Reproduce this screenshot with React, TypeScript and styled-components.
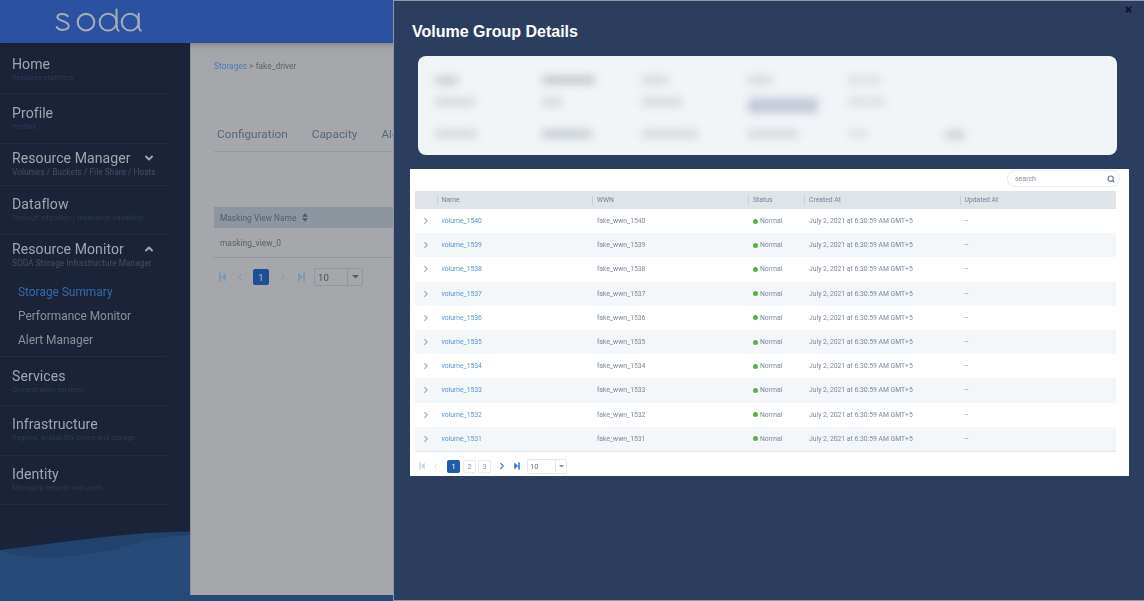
import React from "react";
import styled, { createGlobalStyle } from "styled-components";
import { ChevronDown, ChevronUp, ChevronLeft, ChevronRight, Search, X } from "lucide-react";

const Global = createGlobalStyle`
  html, body { margin: 0; padding: 0; height: 100%; overflow: hidden; background: #2c3e60; }
  * { box-sizing: border-box; }
  body { font-family: Roboto, "Liberation Sans", sans-serif; }
`;

const Page = styled.div`
  position: relative;
  width: 1144px;
  height: 601px;
  display: flex;
  flex-direction: column;
  overflow: hidden;
`;
const Header = styled.header`
  flex: 0 0 43px;
  background: #2a52a0;
  padding: 8px 0 0 55px;
  position: relative;
  z-index: 2;
  box-shadow: 0 1px 6px rgba(30, 30, 40, 0.35);
`;
const Body = styled.div`
  position: relative;
  flex: 1;
  display: flex;
  background: #1a2338;
`;
const WaveArt = styled.svg`
  position: absolute;
  left: 0;
  bottom: 0;
  width: 420px;
  height: 70px;
`;
const Sidebar = styled.nav`
  position: relative;
  flex: 0 0 190px;
  filter: blur(0.35px);
`;
const NavItem = styled.div<{ $h: number; $pt: number }>`
  width: 167px;
  height: ${(p) => p.$h}px;
  padding: ${(p) => p.$pt}px 0 0 12px;
  border-bottom: 1px solid #222c44;
`;
const NavTitleRow = styled.div`
  display: flex;
  align-items: center;
  justify-content: space-between;
  height: 16px;
  padding-right: 12px;
  color: #a1a5ad;
`;
const NavTitle = styled.span`
  font-size: 14.1px;
  line-height: 16px;
  letter-spacing: 0.05px;
`;
const NavSub = styled.div<{ $bright?: boolean }>`
  font-size: ${(p) => (p.$bright ? 8.35 : 7.2)}px;
  line-height: 11px;
  margin-top: ${(p) => (p.$bright ? 1 : 0)}px;
  white-space: nowrap;
  color: ${(p) => (p.$bright ? "#454e63" : "#2f3950")};
`;
const SubList = styled.div`
  display: flex;
  flex-direction: column;
  margin: 11px 0 0 6px;
`;
const SubLink = styled.div<{ $active?: boolean }>`
  height: 24px;
  line-height: 24px;
  font-size: 11.9px;
  white-space: nowrap;
  color: ${(p) => (p.$active ? "#2f6db3" : "#8c9099")};
`;
const Content = styled.main`
  position: relative;
  flex: 0 0 954px;
  height: 552px;
  padding: 17px 0 0 23px;
  background: #a6a7aa;
  border-left: 1px solid #8f9297;
  filter: blur(0.3px);
`;
const Crumbs = styled.div`
  font-size: 8.4px;
  line-height: 12px;
  color: #5f646d;
`;
const CrumbLink = styled.span`
  color: #4a7db5;
`;
const Tabs = styled.div`
  display: flex;
  gap: 24px;
  width: 400px;
  height: 32px;
  margin-top: 48px;
  padding: 7px 0 0 3px;
  border-bottom: 1px solid #96999e;
`;
const Tab = styled.span`
  font-size: 11.8px;
  line-height: 15px;
  color: #56677d;
`;
const BgTableHead = styled.div`
  display: flex;
  align-items: center;
  gap: 6px;
  width: 400px;
  height: 21px;
  margin-top: 55px;
  padding-left: 6px;
  background: #8d969e;
  color: #515d6b;
  font-size: 8.4px;
`;
const BgTableRow = styled.div`
  width: 400px;
  height: 30px;
  padding-left: 6px;
  line-height: 31px;
  font-size: 8.4px;
  color: #5a5f68;
  border-bottom: 1px solid #92979c;
`;
const Pager = styled.div<{ $top: number }>`
  display: flex;
  align-items: center;
  margin-top: ${(p) => p.$top}px;
`;
const Slot = styled.span<{ $gap: number; $color?: string }>`
  display: inline-flex;
  margin-left: ${(p) => p.$gap}px;
  color: ${(p) => p.$color ?? "inherit"};
`;
const PageBox = styled.span<{ $gap: number; $size: number; $active?: boolean; $dim?: boolean }>`
  display: inline-flex;
  align-items: center;
  justify-content: center;
  width: ${(p) => p.$size}px;
  height: ${(p) => p.$size}px;
  margin-left: ${(p) => p.$gap}px;
  border-radius: 2px;
  font-size: ${(p) => (p.$dim ? 9.5 : 7.5)}px;
  border: 1px solid ${(p) => (p.$active ? "transparent" : "#e5ebf0")};
  background: ${(p) => (p.$active ? (p.$dim ? "#1f4f92" : "#1f5cab") : "transparent")};
  color: ${(p) => (p.$active ? (p.$dim ? "#b8c2d0" : "#fff") : "#6d9ad0")};
`;
const SizeSelect = styled.span<{ $gap: number; $w: number; $h: number; $dim?: boolean }>`
  display: inline-flex;
  align-items: stretch;
  width: ${(p) => p.$w}px;
  height: ${(p) => p.$h}px;
  margin-left: ${(p) => p.$gap}px;
  border: 1px solid ${(p) => (p.$dim ? "#94979c" : "#e5e9ec")};
  border-radius: 2px;
  font-size: ${(p) => (p.$dim ? 9.6 : 7.5)}px;
  color: ${(p) => (p.$dim ? "#4c5159" : "#687684")};
`;
const SizeValue = styled.span<{ $dim?: boolean }>`
  flex: 1;
  display: flex;
  align-items: center;
  padding-left: ${(p) => (p.$dim ? 3 : 2)}px;
  border-right: 1px solid ${(p) => (p.$dim ? "#94979c" : "#e5e9ec")};
`;
const SizeArrow = styled.span<{ $dim?: boolean }>`
  flex: 0 0 ${(p) => (p.$dim ? 14 : 10)}px;
  display: flex;
  align-items: center;
  justify-content: center;
  color: ${(p) => (p.$dim ? "#4f5d70" : "#7c8a98")};
`;
const Modal = styled.section`
  position: absolute;
  left: 394px;
  top: 1px;
  right: 0;
  bottom: 1px;
  z-index: 5;
  background: #2c3e60;
  box-shadow: 0 0 0 1px #8f97a5;
`;
const CloseBtn = styled.span`
  position: absolute;
  top: 4px;
  right: 11px;
  display: flex;
  color: #10182a;
`;
const ModalTitle = styled.h2`
  margin: 0;
  padding: 20.5px 0 0 18px;
  font: bold 16px/20px "Liberation Sans", Arial, sans-serif;
  color: #fff;
`;
const DetailCard = styled.div`
  width: 699px;
  height: 99px;
  margin: 14.5px 0 0 24px;
  padding: 20px 0 0 17px;
  background: #f1f5f7;
  border-radius: 8px;
  display: grid;
  grid-template-columns: 107px 100px 106px 100px 97px 60px;
  grid-template-rows: 22px 32px auto;
  overflow: hidden;
`;
const BlurBar = styled.span<{ $w: number; $h?: number; $tone?: string }>`
  display: block;
  width: ${(p) => p.$w}px;
  height: ${(p) => p.$h ?? 8}px;
  background: ${(p) => p.$tone ?? "#d2d7dc"};
  filter: blur(4.5px);
  border-radius: 2px;
`;
const TablePanel = styled.div`
  width: 719px;
  height: 307px;
  margin: 14px 0 0 16px;
  padding: 1px 5px 0;
  background: #fff;
  filter: blur(0.4px);
`;
const SearchRow = styled.div`
  display: flex;
  justify-content: flex-end;
  padding-right: 4px;
  height: 21px;
`;
const SearchBox = styled.div`
  display: flex;
  align-items: center;
  justify-content: space-between;
  width: 113px;
  height: 17px;
  padding: 0 4px 0 7px;
  border: 1px solid #e9edf0;
  border-radius: 8px;
  font-size: 7px;
  color: #84909c;
`;
const SearchGlyph = styled.span`
  display: flex;
  color: #6f8296;
`;
const gridCols = "21.5px 155.5px 156px 56px 155.5px 1fr";
const HeadRow = styled.div`
  display: grid;
  grid-template-columns: ${gridCols};
  width: 701px;
  height: 18px;
  background: #dee4e8;
  align-items: center;
`;
const HeadCell = styled.div`
  height: 9px;
  padding-left: 4px;
  line-height: 9px;
  font-size: 6.8px;
  color: #74869a;
  border-left: 1px solid #c8d0d6;
  white-space: nowrap;
`;
const HeadEmpty = styled.div``;
const DataRow = styled.div<{ $alt: boolean }>`
  display: grid;
  grid-template-columns: ${gridCols};
  align-items: center;
  width: 701px;
  height: 24.2px;
  background: ${(p) => (p.$alt ? "#f3f7f9" : "#fff")};
  font-size: 6.8px;
  color: #7b8999;
  white-space: nowrap;
`;
const Rows = styled.div`
  border-bottom: 1px solid #e4e9ec;
  width: 701px;
`;
const ExpandCell = styled.span`
  display: flex;
  justify-content: center;
  padding-left: 1px;
  color: #83909e;
`;
const Cell = styled.span`
  padding-left: 5px;
`;
const NameCell = styled(Cell)`
  color: #5b92d4;
`;
const StatusCell = styled.span`
  display: flex;
  align-items: center;
  gap: 2px;
  padding-left: 5px;
`;
const Dot = styled.i`
  width: 5px;
  height: 5px;
  border-radius: 50%;
  background: #5cb04a;
`;

const Logo = () => (
  <svg width="87" height="25" viewBox="0 0 90 26" fill="none" stroke="#a5adb6" strokeWidth="2.1" strokeLinecap="round">
    <path d="M13 8.5C11 5.8 3 5 2.2 9.3 1.8 14 13.6 12.8 14 18.5 14 23.6 4 24.2 1.5 19.8" />
    <circle cx="32" cy="14.7" r="8.6" />
    <circle cx="55" cy="14.7" r="8.8" />
    <path d="M63.8 1.5V15.5C63.8 20 64.5 23 66 23.5" />
    <circle cx="78" cy="14.7" r="8.8" />
    <path d="M86.8 6V17C86.8 21 87.5 23 89 23.5" />
  </svg>
);

const EdgeIcon = ({ last, w, h }: { last?: boolean; w: number; h: number }) => (
  <svg width={w} height={h} viewBox="0 0 7 10" fill="currentColor">
    {last ? (
      <>
        <path d="M0 0.5 5 5 0 9.5Z" />
        <rect x="5" y="0.5" width="2" height="9" />
      </>
    ) : (
      <>
        <rect x="0" y="0.5" width="2" height="9" />
        <path d="M7 0.5 2 5 7 9.5Z" />
      </>
    )}
  </svg>
);
const Caret = ({ w }: { w: number }) => (
  <svg width={w} height={w / 2} viewBox="0 0 8 4" fill="currentColor">
    <path d="M0 0H8L4 4Z" />
  </svg>
);
const SortIcon = () => (
  <svg width="6" height="9" viewBox="0 0 7 10" fill="#4c5867">
    <path d="M3.5 0 7 4H0ZM3.5 10 0 6H7Z" />
  </svg>
);

const rowsData = [1540, 1539, 1538, 1537, 1536, 1535, 1534, 1533, 1532, 1531];

const blurCells: Array<[number, number, number, number?, string?]> = [
  [1, 1, 23, 9, "#c9ced3"], [2, 1, 53, 8, "#c0c5cb"], [3, 1, 26, 8], [4, 1, 24, 8], [5, 1, 33, 8, "#dbdfe3"],
  [1, 2, 40], [2, 2, 20], [3, 2, 40], [4, 2, 70, 15, "#c2c9d6"], [5, 2, 37, 8, "#dbdfe3"],
  [1, 3, 42], [2, 3, 50, 8, "#c4c9cf"], [3, 3, 56], [4, 3, 50], [5, 3, 20, 7, "#dde1e4"], [6, 3, 20, 10, "#cfd3d8"],
];
const GridSpot = styled.div<{ $c: number; $r: number }>`
  grid-column: ${(p) => p.$c};
  grid-row: ${(p) => p.$r};
`;

export default function App() {
  return (
    <Page>
      <Global />
      <Header>
        <Logo />
      </Header>
      <Body>
        <WaveArt viewBox="0 0 420 70" preserveAspectRatio="none">
          <path d="M0 19C60 12 110 3 170 1 180 .6 190 .6 420 .6V70H0Z" fill="#21426d" />
          <path d="M0 19.6C12 24 22 26 40 26.2 70 26.5 100 23 130 14 150 8 170 5 190 4H420V70H0Z" fill="#254a78" />
        </WaveArt>
        <Sidebar>
          <NavItem $h={51} $pt={13}>
            <NavTitleRow><NavTitle>Home</NavTitle></NavTitleRow>
            <NavSub>Resource statistics</NavSub>
          </NavItem>
          <NavItem $h={50} $pt={11}>
            <NavTitleRow><NavTitle>Profile</NavTitle></NavTitleRow>
            <NavSub>Profiles</NavSub>
          </NavItem>
          <NavItem $h={42} $pt={6}>
            <NavTitleRow>
              <NavTitle>Resource Manager</NavTitle>
              <ChevronDown size={12} strokeWidth={4} />
            </NavTitleRow>
            <NavSub $bright>Volumes / Buckets / File Share / Hosts</NavSub>
          </NavItem>
          <NavItem $h={49} $pt={10}>
            <NavTitleRow><NavTitle>Dataflow</NavTitle></NavTitleRow>
            <NavSub>Through migration / replication capability.</NavSub>
          </NavItem>
          <NavItem $h={122} $pt={6}>
            <NavTitleRow>
              <NavTitle>Resource Monitor</NavTitle>
              <ChevronUp size={12} strokeWidth={4} />
            </NavTitleRow>
            <NavSub $bright>SODA Storage Infrastructure Manager</NavSub>
            <SubList>
              <SubLink $active>Storage Summary</SubLink>
              <SubLink>Performance Monitor</SubLink>
              <SubLink>Alert Manager</SubLink>
            </SubList>
          </NavItem>
          <NavItem $h={49} $pt={11}>
            <NavTitleRow><NavTitle>Services</NavTitle></NavTitleRow>
            <NavSub>Orchestration services.</NavSub>
          </NavItem>
          <NavItem $h={50} $pt={10}>
            <NavTitleRow><NavTitle>Infrastructure</NavTitle></NavTitleRow>
            <NavSub>Regions, availability zones and storage</NavSub>
          </NavItem>
          <NavItem $h={49} $pt={10}>
            <NavTitleRow><NavTitle>Identity</NavTitle></NavTitleRow>
            <NavSub>Managing tenants and users</NavSub>
          </NavItem>
        </Sidebar>
        <Content>
          <Crumbs><CrumbLink>Storages</CrumbLink> &gt; fake_driver</Crumbs>
          <Tabs>
            <Tab>Configuration</Tab>
            <Tab>Capacity</Tab>
            <Tab>Alerts</Tab>
          </Tabs>
          <BgTableHead>Masking View Name <SortIcon /></BgTableHead>
          <BgTableRow>masking_view_0</BgTableRow>
          <Pager $top={10}>
            <Slot $gap={5} $color="#7d99b4"><EdgeIcon w={7} h={10} /></Slot>
            <Slot $gap={9} $color="#7d99b4"><ChevronLeft size={10} strokeWidth={2.5} /></Slot>
            <PageBox $gap={8} $size={16} $active $dim>1</PageBox>
            <Slot $gap={9} $color="#7d99b4"><ChevronRight size={10} strokeWidth={2.5} /></Slot>
            <Slot $gap={10} $color="#7d99b4"><EdgeIcon last w={7} h={10} /></Slot>
            <SizeSelect $gap={9} $w={49} $h={18} $dim>
              <SizeValue $dim>10</SizeValue>
              <SizeArrow $dim><Caret w={7} /></SizeArrow>
            </SizeSelect>
          </Pager>
        </Content>
      </Body>
      <Modal>
        <CloseBtn><X size={9} strokeWidth={5} /></CloseBtn>
        <ModalTitle>Volume Group Details</ModalTitle>
        <DetailCard>
          {blurCells.map(([c, r, w, h, tone]) => (
            <GridSpot key={`${c}-${r}`} $c={c} $r={r}>
              <BlurBar $w={w} $h={h} $tone={tone} />
            </GridSpot>
          ))}
        </DetailCard>
        <TablePanel>
          <SearchRow>
            <SearchBox>
              search
              <SearchGlyph><Search size={8} strokeWidth={3.5} /></SearchGlyph>
            </SearchBox>
          </SearchRow>
          <HeadRow>
            <HeadEmpty />
            <HeadCell>Name</HeadCell>
            <HeadCell>WWN</HeadCell>
            <HeadCell>Status</HeadCell>
            <HeadCell>Created At</HeadCell>
            <HeadCell>Updated At</HeadCell>
          </HeadRow>
          <Rows>
            {rowsData.map((n, i) => (
              <DataRow key={n} $alt={i % 2 === 1}>
                <ExpandCell><ChevronRight size={10} strokeWidth={2.5} /></ExpandCell>
                <NameCell>volume_{n}</NameCell>
                <Cell>fake_wwn_{n}</Cell>
                <StatusCell><Dot />Normal</StatusCell>
                <Cell>July 2, 2021 at 6:30:59 AM GMT+5</Cell>
                <Cell>--</Cell>
              </DataRow>
            ))}
          </Rows>
          <Pager $top={7}>
            <Slot $gap={4} $color="#c6d9ee"><EdgeIcon w={6} h={8} /></Slot>
            <Slot $gap={6} $color="#c6d9ee"><ChevronLeft size={9} strokeWidth={2.5} /></Slot>
            <PageBox $gap={7} $size={13} $active>1</PageBox>
            <PageBox $gap={3} $size={13}>2</PageBox>
            <PageBox $gap={2} $size={13}>3</PageBox>
            <Slot $gap={6} $color="#4a86cf"><ChevronRight size={10} strokeWidth={3} /></Slot>
            <Slot $gap={7} $color="#3d7cc9"><EdgeIcon last w={6} h={8} /></Slot>
            <SizeSelect $gap={7} $w={40} $h={15}>
              <SizeValue>10</SizeValue>
              <SizeArrow><Caret w={5} /></SizeArrow>
            </SizeSelect>
          </Pager>
        </TablePanel>
      </Modal>
    </Page>
  );
}
